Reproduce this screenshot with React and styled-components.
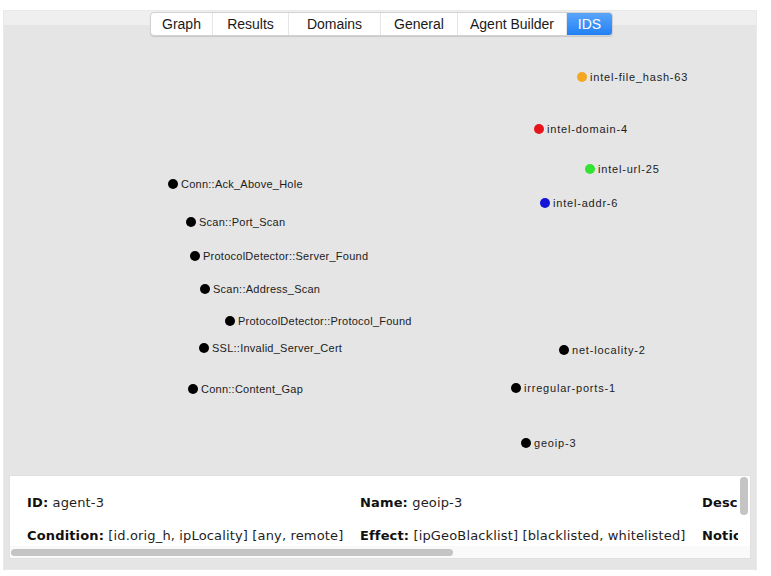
import styled, { createGlobalStyle } from "styled-components";

const GlobalStyle = createGlobalStyle`
  html, body {
    margin: 0;
    padding: 0;
    background: #ffffff;
  }
  body {
    font-family: "Liberation Sans", Arial, sans-serif;
    color: #1e1e1e;
  }
`;

const TABS = [
  { name: "Graph", width: 61 },
  { name: "Results", width: 76 },
  { name: "Domains", width: 92 },
  { name: "General", width: 77 },
  { name: "Agent Builder", width: 109 },
  { name: "IDS", width: 46 },
];

// graph nodes: x/y are dot centres in canvas coordinates
const NODES = [
  { label: "intel-file_hash-63", x: 578, y: 42, color: "#f5a623", mono: true },
  { label: "intel-domain-4", x: 535, y: 94, color: "#e8141c", mono: true },
  { label: "intel-url-25", x: 586, y: 134, color: "#33e333", mono: true },
  { label: "intel-addr-6", x: 541, y: 168, color: "#1414d6", mono: true },
  { label: "Conn::Ack_Above_Hole", x: 169, y: 149 },
  { label: "Scan::Port_Scan", x: 187, y: 187 },
  { label: "ProtocolDetector::Server_Found", x: 191, y: 221 },
  { label: "Scan::Address_Scan", x: 201, y: 254 },
  { label: "ProtocolDetector::Protocol_Found", x: 226, y: 286 },
  { label: "SSL::Invalid_Server_Cert", x: 200, y: 313 },
  { label: "Conn::Content_Gap", x: 189, y: 354 },
  { label: "net-locality-2", x: 560, y: 315, mono: true },
  { label: "irregular-ports-1", x: 512, y: 353, mono: true },
  { label: "geoip-3", x: 522, y: 408, mono: true },
];

const DETAIL_ROWS = [
  [
    { key: "ID:", value: "agent-3" },
    { key: "Name:", value: "geoip-3" },
    { key: "Desc", value: "" },
  ],
  [
    { key: "Condition:", value: "[id.orig_h, ipLocality] [any, remote]" },
    { key: "Effect:", value: "[ipGeoBlacklist] [blacklisted, whitelisted]" },
    { key: "Notic", value: "" },
  ],
];

export default function App() {
  return (
    <Page>
      <GlobalStyle />
      <Window>
        <TabBar>
          {TABS.map((t) => (
            <Tab key={t.name} $width={t.width} $active={t.name === "IDS"}>
              {t.name}
            </Tab>
          ))}
        </TabBar>
        <Canvas>
          {NODES.map((n) => (
            <Node key={n.label} $x={n.x} $y={n.y}>
              <Dot $color={n.color} />
              <NodeLabel $mono={n.mono}>{n.label}</NodeLabel>
            </Node>
          ))}
        </Canvas>
        <Details>
          <DetailBody>
            <DetailGrid>
              {DETAIL_ROWS.map((row, i) => (
                <DetailRow key={i}>
                  {row.map((cell) => (
                    <Cell key={cell.key}>
                      <b>{cell.key}</b>
                      {cell.value && ` ${cell.value}`}
                    </Cell>
                  ))}
                </DetailRow>
              ))}
            </DetailGrid>
            <VScroll>
              <VThumb />
            </VScroll>
          </DetailBody>
          <HScroll>
            <HThumb />
          </HScroll>
        </Details>
      </Window>
    </Page>
  );
}

const Page = styled.div`
  padding: 10px 14px 0 3px;
  height: 576px;
  box-sizing: border-box;
`;

const Window = styled.div`
  height: 560px;
  display: flex;
  flex-direction: column;
  background: linear-gradient(#efefef 0 14px, #e5e5e5 14px);
  border: 1px solid #e9e9e9;
  box-sizing: border-box;
`;

const TabBar = styled.div`
  align-self: center;
  display: flex;
  margin-top: 1px;
  margin-left: 3px;
  height: 22px;
  background: #ffffff;
  border: 1px solid #d2d2d2;
  border-radius: 4px;
  box-shadow: 0 1px 1px rgba(0, 0, 0, 0.12);
  overflow: hidden;
`;

const Tab = styled.div`
  display: flex;
  align-items: center;
  justify-content: center;
  width: ${(p) => p.$width}px;
  box-sizing: border-box;
  font-size: 14px;
  color: ${(p) => (p.$active ? "#ffffff" : "#1a1a1a")};
  background: ${(p) =>
    p.$active ? "linear-gradient(#5aa5fb, #2180f4)" : "transparent"};
  border-left: 1px solid #e6e6e6;
  &:first-child {
    border-left: none;
  }
`;

const Canvas = styled.div`
  position: relative;
  flex: 1;
`;

const Node = styled.div.attrs((p) => ({
  style: { left: `${p.$x - 5}px`, top: `${p.$y - 8}px` },
}))`
  position: absolute;
  display: flex;
  align-items: center;
  gap: 3px;
  height: 14px;
  white-space: nowrap;
`;

const Dot = styled.span`
  width: 10px;
  height: 10px;
  border-radius: 50%;
  background: ${(p) => p.$color || "#000000"};
`;

const NodeLabel = styled.span`
  font-size: 11px;
  color: #1c1c1c;
  letter-spacing: ${(p) => (p.$mono ? "0.8px" : "0.25px")};
`;

const Details = styled.div`
  margin: 0 5px 10px 5px;
  height: 84px;
  box-sizing: border-box;
  display: flex;
  flex-direction: column;
  background: #ffffff;
  border: 1px solid #e0e0e0;
`;

const DetailBody = styled.div`
  flex: 1;
  display: flex;
  overflow: hidden;
`;

const DetailGrid = styled.div`
  flex: 1;
  overflow: hidden;
  padding: 19px 0 0 17px;
  display: flex;
  flex-direction: column;
  gap: 17px;
`;

const DetailRow = styled.div`
  display: grid;
  grid-template-columns: 333px 342px 60px;
  font-family: "DejaVu Sans", Verdana, sans-serif;
  font-size: 13px;
  letter-spacing: 0.15px;
  line-height: 16px;
  white-space: nowrap;
`;

const Cell = styled.div`
  overflow: hidden;
  color: #1e1e1e;
  b {
    font-weight: bold;
    color: #111111;
  }
`;

const VScroll = styled.div`
  width: 12px;
  padding: 1px 2px;
  box-sizing: border-box;
`;

const VThumb = styled.div`
  width: 8px;
  height: 38px;
  border-radius: 4px;
  background: #c4c4c4;
`;

const HScroll = styled.div`
  height: 12px;
  display: flex;
  align-items: center;
  padding: 0 12px 0 1px;
  background: #fafafa;
`;

const HThumb = styled.div`
  width: 442px;
  height: 7px;
  border-radius: 4px;
  background: #c4c4c4;
`;
